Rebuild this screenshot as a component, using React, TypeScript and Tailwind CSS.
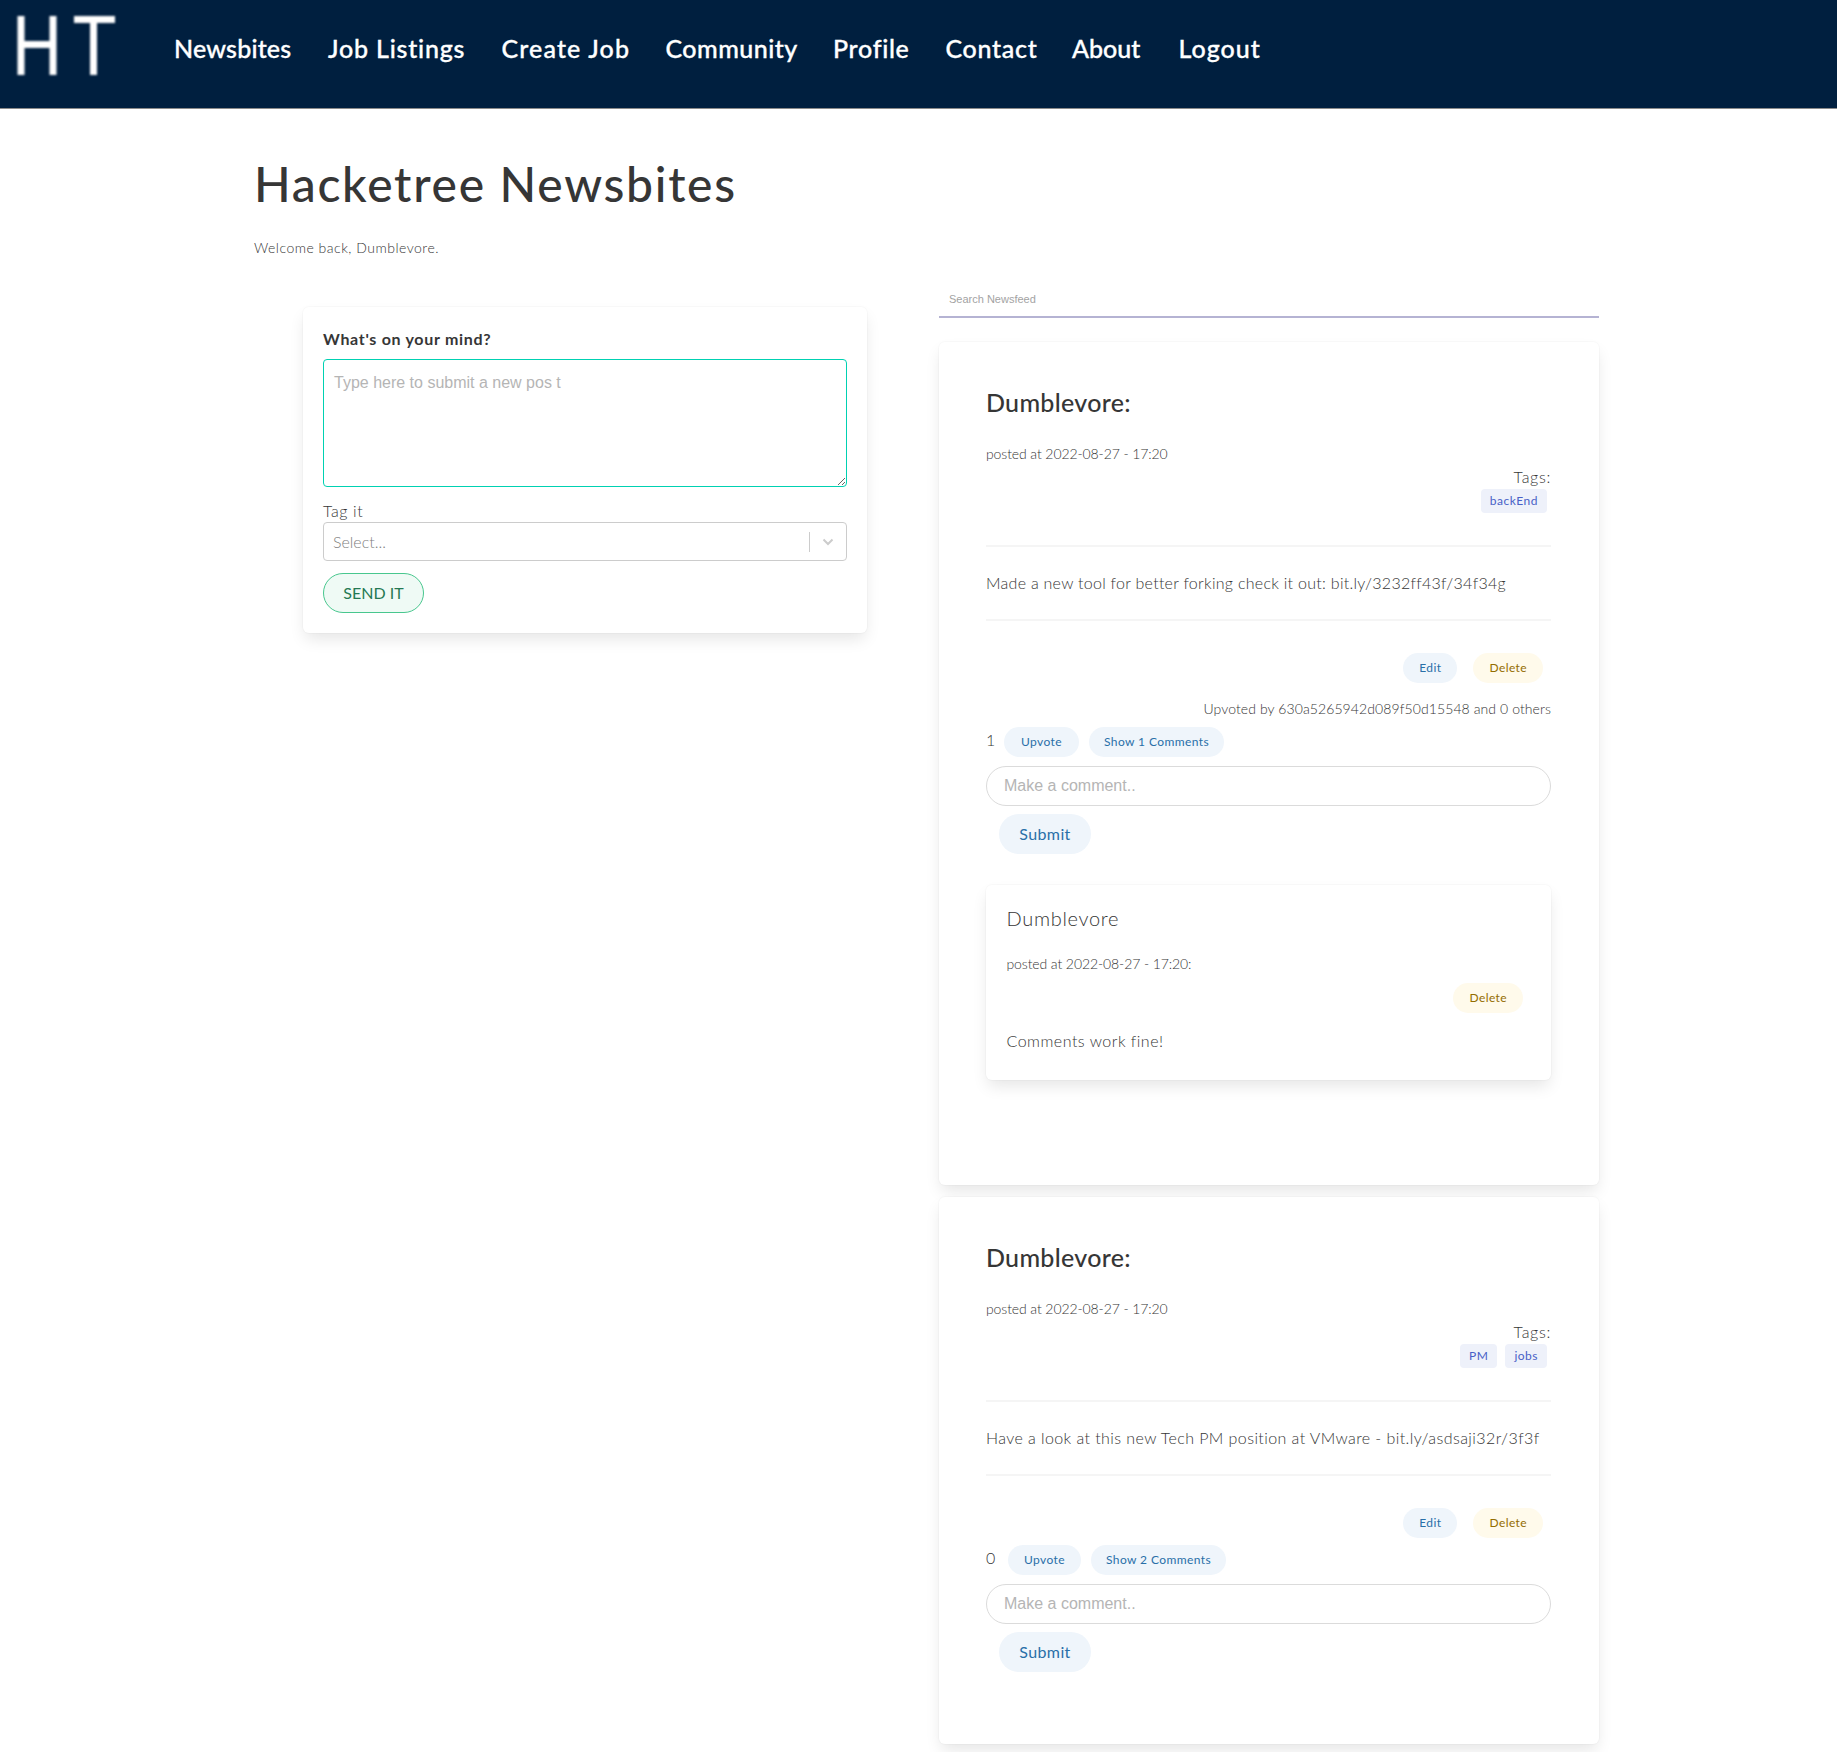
const sans = "font-['Lato','Noto_Sans',sans-serif]"

const navItems = [
  { label: 'Newsbites', cls: 'w-[118px] tracking-[0.2px]' },
  { label: 'Job Listings', cls: 'w-[137.5px] tracking-[0.8px]' },
  { label: 'Create Job', cls: 'w-[128px] tracking-[1.15px]' },
  { label: 'Community', cls: 'w-[131.5px] tracking-[0.45px]' },
  { label: 'Profile', cls: 'w-[76.5px] tracking-[0.7px]' },
  { label: 'Contact', cls: 'w-[90.5px] tracking-[0.7px]' },
  { label: 'About', cls: 'w-[70.5px] tracking-[0px]' },
  { label: 'Logout', cls: 'w-[82px] tracking-[1px]' },
]

function Logo() {
  return (
    <svg width="120" height="90" viewBox="0 0 120 90" className="shrink-0 blur-[0.8px]">
      <path d="M21 16v59M53 16v59M21 44.5h32M74 19.5h41M93.5 20v55" stroke="#ffffff" strokeWidth="7" fill="none" />
    </svg>
  )
}

function Pill({ label, tone = 'blue', className = 'px-[15px]' }: { label: string; tone?: 'blue' | 'amber'; className?: string }) {
  const colors = tone === 'blue' ? 'bg-[#eff5fb] text-[#296fa8]' : 'bg-[#fffaeb] text-[#946c00]'
  return (
    <button className={`h-[30px] shrink-0 rounded-full text-[12px] leading-[30px] tracking-[0.4px] ${colors} ${className}`}>
      {label}
    </button>
  )
}

function Tag({ label }: { label: string }) {
  return (
    <span className="h-6 rounded bg-[#eef1fa] px-[9px] text-[12px] leading-6 tracking-[0.5px] text-[#485fc7]">{label}</span>
  )
}

function Divider() {
  return <div className="h-0.5 w-full bg-[#f5f5f5]" />
}

type CommentFormProps = {
  votes: number
  comments: number
  upvoter?: string
}

function VoteRow({ votes, comments, upvoter }: CommentFormProps) {
  return (
    <>
      {upvoter && (
        <p className="mt-[15px] text-right text-[14px] leading-[21px] font-light tracking-[0.09px] text-[#363636]">
          Upvoted by {upvoter} and 0 others
        </p>
      )}
      <div className={`flex items-start ${upvoter ? 'mt-2' : 'mt-[7px]'}`}>
        <span className={`mt-px text-[16px] leading-6 font-light text-[#363636] ${votes === 0 ? 'w-[22px]' : 'w-[18px]'}`}>{votes}</span>
        <div className="flex gap-[10px]">
          <Pill label="Upvote" className={votes === 0 ? 'w-[73px]' : 'w-[75px]'} />
          <Pill label={`Show ${comments} Comments`} />
        </div>
      </div>
      <div className="mt-[9px] h-10 rounded-full border border-[#dbdbdb] pl-[17px] font-['Liberation_Sans',sans-serif] text-[16px] leading-[38px] text-[#b5b5b5]">
        Make a comment..
      </div>
      <button className="mt-2 ml-[13px] block h-10 w-[92px] rounded-full bg-[#eff5fb] text-[16px] tracking-[0.4px] text-[#296fa8]">
        Submit
      </button>
    </>
  )
}

type PostProps = {
  body: string
  bodyTracking: string
  tags: string[]
  votes: number
  comments: number
  upvoter?: string
  children?: React.ReactNode
  className: string
}

function Post({ body, bodyTracking, tags, votes, comments, upvoter, children, className }: PostProps) {
  return (
    <article className={`rounded-md bg-white pt-[45px] pr-12 pl-[47px] shadow-[0_8px_16px_-2px_rgba(10,10,10,0.1),0_0_0_1px_rgba(10,10,10,0.02)] ${className}`}>
      <h2 className="text-[25px] leading-[30px] font-medium tracking-[0.3px] text-[#363636]">Dumblevore:</h2>
      <p className="mt-[26px] text-[14px] leading-[21px] font-light tracking-[-0.1px] text-[#363636]">posted at 2022-08-27 - 17:20</p>
      <div className="flex flex-col items-end">
        <span className="mt-[1px] text-[16px] leading-6 font-light tracking-[0.7px] text-[#363636]">Tags:</span>
        <div className="mr-1 flex gap-2">
          {tags.map((tag) => (
            <Tag key={tag} label={tag} />
          ))}
        </div>
      </div>
      <div className="mt-8">
        <Divider />
      </div>
      <p className={`py-[24px] text-[16px] leading-6 font-light whitespace-nowrap text-[#363636] ${bodyTracking}`}>{body}</p>
      <Divider />
      <div className="mt-[32px] flex justify-end gap-4 pr-2">
        <Pill label="Edit" className="px-4" />
        <Pill label="Delete" tone="amber" className="px-4" />
      </div>
      <VoteRow votes={votes} comments={comments} upvoter={upvoter} />
      {children}
    </article>
  )
}

export default function App() {
  return (
    <div className={`min-h-[1752px] bg-white text-[#4a4a4a] ${sans}`}>
      <nav className="flex h-[109px] items-start border-b border-[#8a8a8a] bg-[#001f3f]">
        <Logo />
        <ul className="mt-[33px] ml-[54px] flex gap-9">
          {navItems.map((item) => (
            <li key={item.label} className={`text-[25px] leading-[30px] font-medium whitespace-nowrap text-white [-webkit-text-stroke:0.35px_white] ${item.cls}`}>
              {item.label}
            </li>
          ))}
        </ul>
      </nav>

      <main className="pl-[254px]">
        <h1 className="mt-[46px] text-[48px] leading-[58px] font-medium tracking-[1.7px] text-[#363636]">Hacketree Newsbites</h1>
        <p className="mt-[24px] text-[14px] leading-[21px] font-light tracking-[0.5px] text-[#363636]">Welcome back, Dumblevore.</p>

        <div className="mt-[21px] flex items-start">
          <section className="mt-[28px] ml-[49px] w-[564px] rounded-md bg-white px-5 pt-[20px] pb-[20px] shadow-[0_8px_16px_-2px_rgba(10,10,10,0.1),0_0_0_1px_rgba(10,10,10,0.02)]">
            <h3 className="text-[16px] leading-6 font-bold tracking-[0.7px] text-[#363636]">What's on your mind?</h3>
            <textarea
              className="mt-2 block h-[128px] w-full rounded border border-[#00d1b2] px-[10px] pt-[11px] pb-[9px] font-['Liberation_Sans',sans-serif] text-[16px] leading-6 placeholder:text-[#b5b5b5]"
              placeholder="Type here to submit a new pos t"
            />
            <label className="mt-[12px] block text-[16px] leading-[23px] font-light tracking-[0.6px] text-[#363636]">Tag it</label>
            <div className="flex h-[39px] items-center rounded border border-[#cccccc] pl-[9px]">
              <span className="flex-1 text-[16px] font-light text-[#808080]">Select...</span>
              <span className="h-5 w-px bg-[#cccccc]" />
              <svg width="36" height="20" viewBox="0 0 36 20" fill="none">
                <path d="M13.5 7.5 18 12l4.5-4.5" stroke="#cccccc" strokeWidth="2" />
              </svg>
            </div>
            <button className="mt-3 h-10 w-[101px] rounded-full border border-[#48c78e] bg-[#effaf5] text-[16px] text-[#257953]">
              SEND IT
            </button>
          </section>

          <section className="ml-[72px] w-[660px] pt-[14px]">
            <div className="h-[25px] border-b-2 border-[#b5b3d3] pl-[10px] font-['Liberation_Sans',sans-serif] text-[11px] leading-[13px] text-[#a3a3a3]">
              Search Newsfeed
            </div>
            <Post
              className="mt-6 h-[843px]"
              body="Made a new tool for better forking check it out: bit.ly/3232ff43f/34f34g"
              bodyTracking="tracking-[0.28px]"
              tags={['backEnd']}
              votes={1}
              comments={1}
              upvoter="630a5265942d089f50d15548"
            >
              <div className="mt-[31px] h-[195px] rounded-md bg-white pt-[18px] pr-5 pl-[20.5px] shadow-[0_8px_16px_-2px_rgba(10,10,10,0.1),0_0_0_1px_rgba(10,10,10,0.02)]">
                <h4 className="text-[20px] leading-[30px] font-light tracking-[0.7px] text-[#363636]">Dumblevore</h4>
                <p className="mt-[20px] text-[14px] leading-[21px] font-light tracking-[-0.1px] text-[#363636]">posted at 2022-08-27 - 17:20:</p>
                <div className="mt-[9px] flex justify-end pr-2">
                  <Pill label="Delete" tone="amber" className="px-4" />
                </div>
                <p className="mt-[16px] text-[16px] leading-6 font-light tracking-[0.5px] text-[#363636]">Comments work fine!</p>
              </div>
            </Post>
            <Post
              className="mt-[12px] h-[547px]"
              body="Have a look at this new Tech PM position at VMware - bit.ly/asdsaji32r/3f3f"
              bodyTracking="tracking-[0.42px]"
              tags={['PM', 'jobs']}
              votes={0}
              comments={2}
            />
          </section>
        </div>
      </main>
    </div>
  )
}
